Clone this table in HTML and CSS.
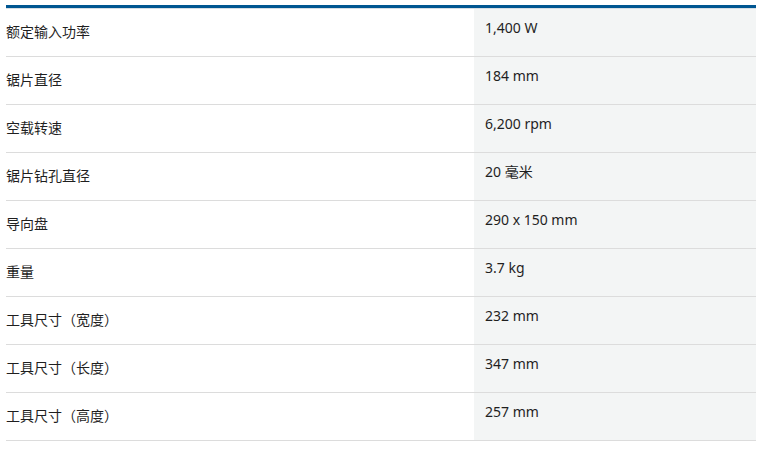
FILE: index.html
```html
<!DOCTYPE html>
<html lang="zh-CN">
<head>
<meta charset="utf-8">
<title>技术参数</title>
<link rel="stylesheet" href="styles.css">
</head>
<body>
<div class="specs">
  <div class="row"><div class="label">额定输入功率</div><div class="value">1,400 W</div></div>
  <div class="row"><div class="label">锯片直径</div><div class="value">184 mm</div></div>
  <div class="row"><div class="label">空载转速</div><div class="value">6,200 rpm</div></div>
  <div class="row"><div class="label">锯片钻孔直径</div><div class="value">20 毫米</div></div>
  <div class="row"><div class="label">导向盘</div><div class="value">290 x 150 mm</div></div>
  <div class="row"><div class="label">重量</div><div class="value">3.7 kg</div></div>
  <div class="row"><div class="label">工具尺寸（宽度）</div><div class="value">232 mm</div></div>
  <div class="row"><div class="label">工具尺寸（长度）</div><div class="value">347 mm</div></div>
  <div class="row"><div class="label">工具尺寸（高度）</div><div class="value">257 mm</div></div>
</div>
</body>
</html>
```
FILE: styles.css
```css
html, body {
  margin: 0;
  padding: 0;
  background: #ffffff;
}
body {
  padding: 5px 22px 0 6px;
  font-family: "Noto Sans", "Noto Sans CJK SC", sans-serif;
  font-size: 14px;
  color: #1f1f1f;
}
.specs {
  border-top: 3px solid #005691;
  width: 750px;
}
.row {
  display: grid;
  grid-template-columns: 468px 282px;
  height: 48px;
  box-sizing: border-box;
  border-bottom: 1px solid #dcdcdc;
}
.row:first-child {
  height: 49px;
  border-top: 1px solid #d6dde3;
}
.label {
  display: flex;
  align-items: center;
  line-height: 20px;
  padding-bottom: 1px;
}
.value {
  background: #f3f5f5;
  padding: 9px 10px 0 11px;
  line-height: 20px;
}
.row:first-child .value {
  padding-top: 9px;
}
```
